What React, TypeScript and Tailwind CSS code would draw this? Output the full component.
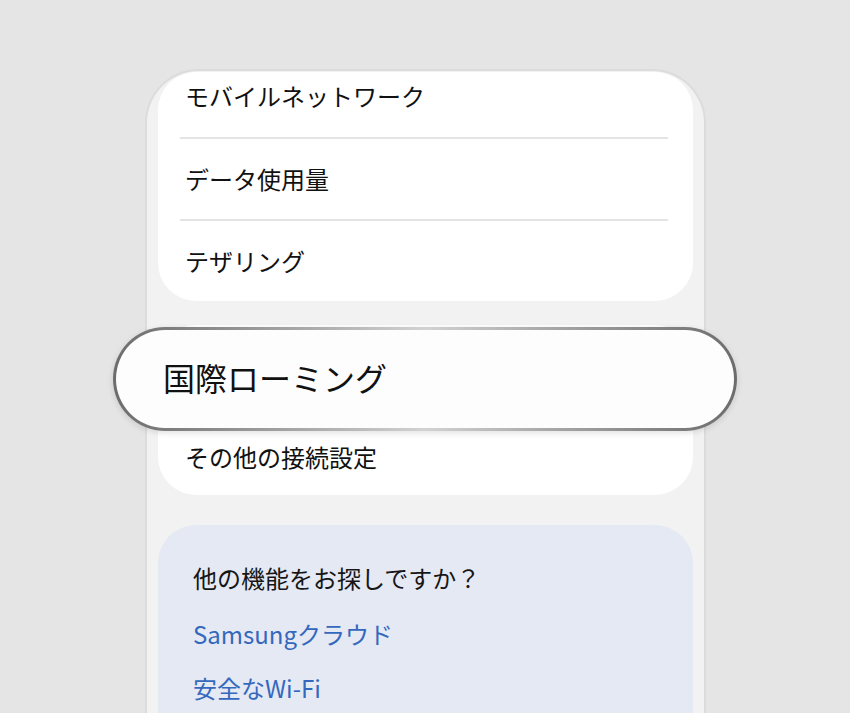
import * as React from "react"

const font = { fontFamily: '"Noto Sans CJK JP", "Noto Sans", sans-serif' }

function Row({ label, height, divider }: { label: string; height: string; divider?: boolean }) {
  return (
    <div className="flex flex-col">
      <div className={`flex items-center pl-[27px] text-[24px] leading-none text-[#111] ${height}`}>
        {label}
      </div>
      {divider && <div className="ml-[22px] mr-[25px] h-[2px] bg-[#e4e4e4]" />}
    </div>
  )
}

export default function App() {
  return (
    <div className="relative h-[713px] w-[850px] overflow-hidden bg-[#e5e5e5]" style={font}>
      <div className="ml-[145px] mt-[69px] h-[700px] w-[561px] rounded-t-[54px] border-2 border-b-0 border-[#dcdcdc] bg-[#f2f2f3] px-[11px] pt-px">
        <div className="flex flex-col overflow-hidden rounded-[38px] bg-white">
          <div className="flex flex-col">
            <div className="flex h-[37px] items-end pl-[27px] pb-[1px] text-[24px] leading-none text-[#111]">
              モバイルネットワーク
            </div>
            <div className="h-[28px]" />
            <div className="ml-[22px] mr-[25px] h-[2px] bg-[#e4e4e4]" />
          </div>
          <Row label="データ使用量" height="h-[80px]" divider />
          <Row label="テザリング" height="h-[80px]" />
        </div>

        <div className="mt-[24px] flex flex-col rounded-[38px] bg-white">
          <div className="h-[94px]" />
          <div className="flex h-[76px] items-center pl-[27px] text-[24px] leading-none text-[#111]">
            その他の接続設定
          </div>
        </div>

        <div className="mt-[30px] flex h-[260px] flex-col rounded-[38px] bg-[#e4e9f4] pl-[35px] pt-[40px]">
          <div className="text-[24px] leading-[26px] text-[#161616]">他の機能をお探しですか？</div>
          <div className="mt-[30px] text-[24px] leading-[26px] text-[#3468bd]">Samsungクラウド</div>
          <div className="mt-[28px] text-[24px] leading-[26px] text-[#3468bd]">安全なWi-Fi</div>
        </div>
      </div>

      <div className="absolute left-[113px] top-[327px] h-[104px] w-[624px] rounded-full bg-gradient-to-r from-[#6c6c6c] via-[#d2d2d2] to-[#6c6c6c] p-[3px] shadow-[0_2px_6px_rgba(0,0,0,0.12)]">
        <div className="flex h-full w-full items-center rounded-full bg-[#fdfdfe] pb-[5px] pl-[47px] text-[32px] leading-none text-[#111]">
          国際ローミング
        </div>
      </div>
    </div>
  )
}
